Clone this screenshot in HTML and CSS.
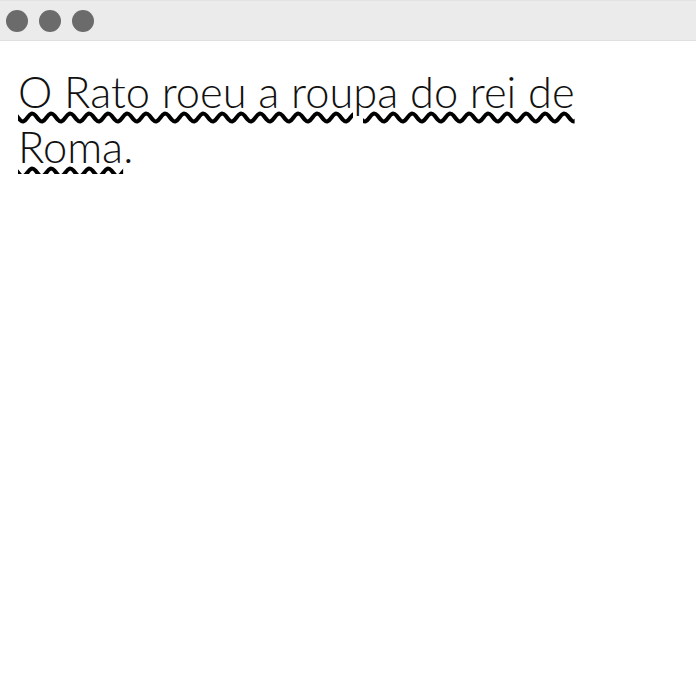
FILE: index.html
```html
<!DOCTYPE html>
<html lang="pt">
<head>
<meta charset="utf-8">
<link rel="stylesheet" href="styles.css">
</head>
<body>
<header class="titlebar">
  <span class="dot"></span>
  <span class="dot"></span>
  <span class="dot"></span>
</header>
<main class="content">
  <p class="text"><span class="wavy">O Rato roeu a roupa do rei de Roma</span>.</p>
</main>
</body>
</html>
```
FILE: styles.css
```css
html, body {
  margin: 0;
  padding: 0;
  background: #fff;
}
.titlebar {
  height: 41px;
  box-sizing: border-box;
  background: #ebebeb;
  border-top: 1px solid #e2e2e2;
  border-bottom: 1px solid #e0e0e0;
  display: flex;
  align-items: center;
  gap: 11px;
  padding-left: 6px;
}
.dot {
  width: 22px;
  height: 22px;
  border-radius: 50%;
  background: #6b6b6b;
}
.content {
  padding: 0 18px;
}
.text {
  margin: 23px 0 0;
  font-family: Lato, "Open Sans", sans-serif;
  font-weight: 300;
  font-size: 43.4px;
  line-height: 55px;
  color: #111;
  width: 600px;
}
.wavy {
  text-decoration: underline wavy #000;
  text-decoration-thickness: 4px;
  text-underline-offset: 4px;
}
```
